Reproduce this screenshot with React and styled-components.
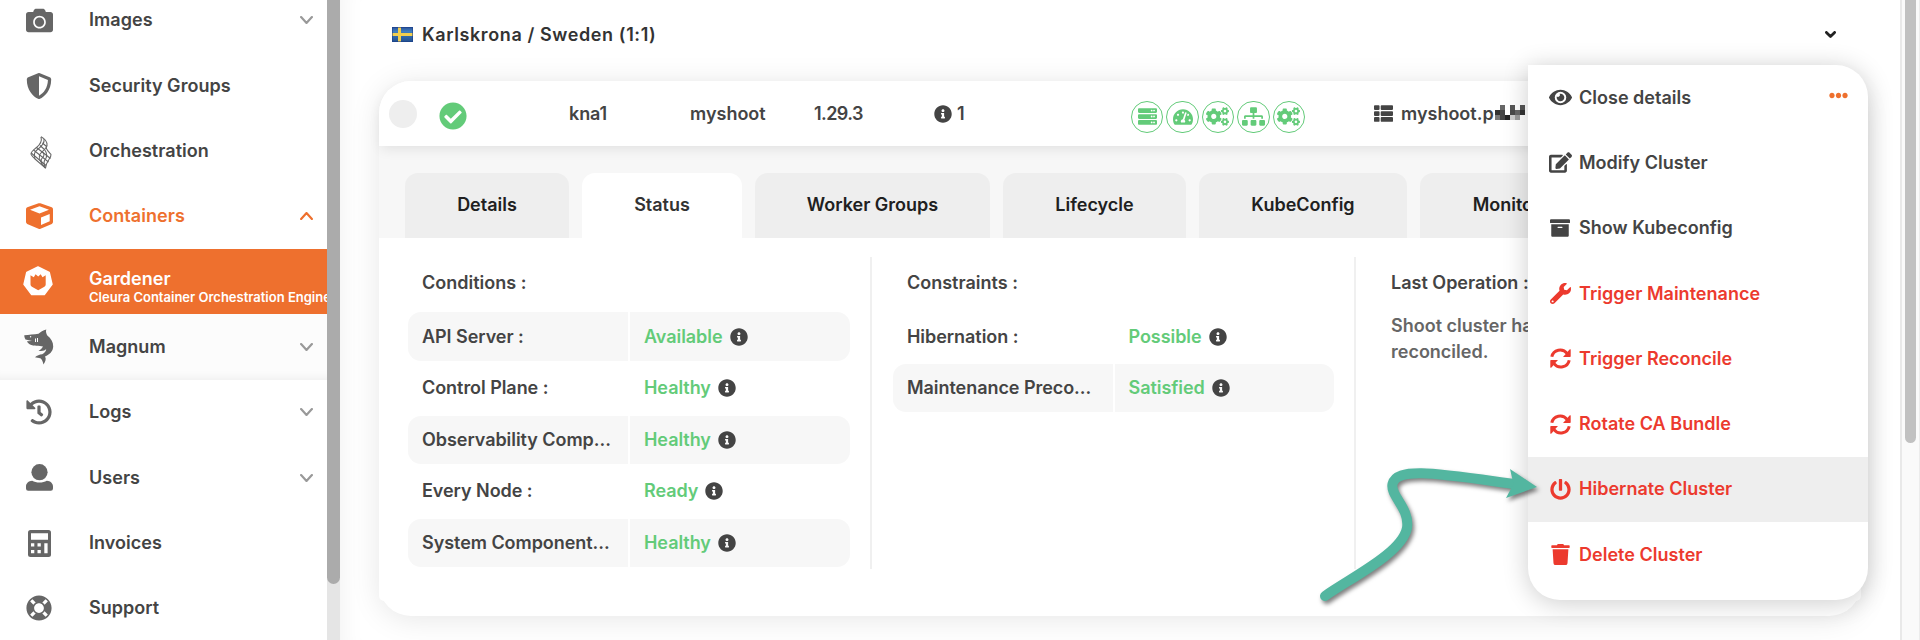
import React from "react";
import styled, { createGlobalStyle, css } from "styled-components";
import {
  FaCamera, FaShieldAlt, FaHistory, FaLifeRing, FaCheckCircle, FaInfoCircle, FaServer,
  FaTachometerAlt, FaCogs, FaSitemap, FaThList, FaEye, FaEdit, FaArchive, FaWrench,
  FaPowerOff, FaTrash, FaEllipsisH,
} from "react-icons/fa";

const color = {
  text: "#444444",
  icon: "#666666",
  orange: "#ee702e",
  green: "#63cb79",
  red: "#ec3a2e",
  grey: "#eeeeee",
  pale: "#f7f7f7",
};

const GlobalStyle = createGlobalStyle`
  * { box-sizing: border-box; }
  body {
    margin: 0;
    height: 640px;
    overflow: hidden;
    background: #fff;
    color: ${color.text};
    font: 600 18px/26px Inter, "Liberation Sans", sans-serif;
  }
`;

const Page = styled.div`
  display: flex;
  width: 1920px;
  height: 640px;
  overflow: hidden;
`;

const Label = styled.span`
  white-space: nowrap;
  letter-spacing: ${(p) => p.$track ?? 0}px;
`;

/* ---------- sidebar ---------- */

const Sidebar = styled.nav`
  width: 327px;
  flex: none;
  overflow: hidden;
  background: #fff;
`;

const SideList = styled.div`
  display: flex;
  flex-direction: column;
  margin-top: -12.2px;
`;

const SideItem = styled.div`
  display: flex;
  align-items: center;
  height: 65.33px;
  flex: none;
  padding-right: 14px;
  color: ${(p) => (p.$tone === "open" ? color.orange : color.text)};
  ${(p) => p.$tone === "sub" && css`
    background: #fcfcfc;
    box-shadow: inset 0 -10px 10px -8px rgba(0, 0, 0, 0.06);
  `}
  ${(p) => p.$tone === "active" && css`
    background: ${color.orange};
    color: #fff;
    padding-right: 0;
  `}
`;

const SideIcon = styled.span`
  display: flex;
  justify-content: center;
  width: 78px;
  margin-right: 11px;
  flex: none;
  color: ${(p) => (p.$tone === "open" ? color.orange : p.$tone === "active" ? "#fff" : color.icon)};
  svg { display: block; }
`;

const SideText = styled.div`
  display: flex;
  flex-direction: column;
  flex: 1;
  min-width: 0;
  padding-top: ${(p) => (p.$two ? 7 : 0)}px;
`;

const SubText = styled(Label)`
  font-size: 13px;
  line-height: 16px;
  margin-top: -3px;
`;

const Gutter = styled.div`
  width: 13px;
  flex: none;
  background: #e5e5e5;
`;

const GutterThumb = styled.div`
  height: 584px;
  border-radius: 0 0 7px 7px;
  background: #ababab;
`;

/* ---------- main ---------- */

const Main = styled.main`
  width: 1560px;
  flex: none;
  height: 640px;
  padding-left: 39px;
  box-shadow: inset 24px 0 22px -20px rgba(0, 0, 0, 0.05);
`;

const Region = styled.header`
  display: flex;
  align-items: center;
  height: 81px;
  padding: 0 64px 12px 13px;
  color: #333;
`;

const RegionName = styled.div`
  flex: 1;
  padding: 0 0 0 9px;
`;

const Card = styled.section`
  width: 1482px;
  height: 535px;
  background: #fff;
  border-radius: 32px;
  box-shadow: 0 3px 30px rgba(0, 0, 0, 0.1);
`;

const Summary = styled.div`
  position: relative;
  display: flex;
  align-items: center;
  height: 65px;
  padding-left: 10px;
  border-radius: 32px 32px 0 0;
  background: #fff;
  box-shadow: 0 5px 13px -2px rgba(0, 0, 0, 0.09);
`;

const Dot = styled.div`
  width: 28px;
  height: 28px;
  border-radius: 50%;
  background: ${color.grey};
  margin-right: 22px;
`;

const Cell = styled.div`
  display: flex;
  align-items: center;
  width: ${(p) => p.$w}px;
  gap: ${(p) => p.$gap || 5}px;
  flex: none;
  padding-top: ${(p) => p.$drop || 0}px;
  color: ${(p) => p.$color || "inherit"};
`;

const Ring = styled.span`
  display: flex;
  align-items: center;
  justify-content: center;
  width: 32.4px;
  height: 32.4px;
  border: 1.3px solid ${color.green};
  border-radius: 50%;
  flex: none;
`;

const Mosaic = styled.div`
  display: grid;
  grid-template-columns: repeat(6, 5px);
  grid-auto-rows: 5px;
  margin-left: -7px;
  margin-bottom: 2px;
`;

const Pixel = styled.i`
  background: ${(p) => p.$c};
`;

const Tabs = styled.div`
  display: flex;
  gap: 13px;
  height: 92px;
  padding: 26.5px 0 0 26px;
  background: ${color.pale};
`;

const Tab = styled.div`
  display: flex;
  align-items: center;
  justify-content: center;
  width: ${(p) => p.$w}px;
  flex: none;
  border-radius: 13px 13px 0 0;
  background: ${(p) => (p.$on ? "#fff" : color.grey)};
  color: ${(p) => (p.$on ? "#333" : "#202020")};
`;

const Panel = styled.div`
  display: flex;
  height: 363px;
  padding: 19px 0 0 29px;
  background: #fff;
  border-radius: 0 0 5px 5px;
`;

const Column = styled.div`
  width: ${(p) => p.$w}px;
  height: 312px;
  flex: none;
  padding-right: 20px;
  padding-left: ${(p) => p.$left || 0}px;
  border-left: ${(p) => (p.$left ? "2px solid #f0f0f0" : "0")};
`;

const ColumnTitle = styled.div`
  padding: 13px 0 0 14px;
  height: 55.4px;
`;

const Row = styled.div`
  display: grid;
  grid-template-columns: ${(p) => p.$split}px 1fr;
  gap: 2px;
  height: 48.5px;
  margin-bottom: 3.1px;
`;

const RowCell = styled.div`
  display: flex;
  align-items: center;
  gap: 7px;
  padding-left: 14px;
  background: ${(p) => (p.$shade ? color.pale : "transparent")};
  border-radius: ${(p) => (p.$end ? "0 13px 13px 0" : "13px 0 0 13px")};
  svg { color: ${color.text}; }
`;

const Good = styled(Label)`
  color: ${color.green};
`;

const Note = styled.p`
  margin: 0 0 0 14px;
  padding-top: 1px;
  width: 210px;
  color: #666;
`;

/* ---------- window scrollbar ---------- */

const Scroll = styled.div`
  width: 20px;
  height: 640px;
  flex: none;
  padding-left: 3px;
  background: #fafafa;
  border-left: 2px solid #e9e9e9;
  border-right: 1px solid #ececec;
`;

const ScrollThumb = styled.div`
  width: 11px;
  height: 443px;
  border-radius: 0 0 6px 6px;
  background: #c1c1c1;
`;

/* ---------- floating menu ---------- */

const Menu = styled.div`
  position: absolute;
  left: 1528px;
  top: 65px;
  width: 340px;
  height: 535px;
  background: #fff;
  border-radius: 0 32px 32px 32px;
  box-shadow: 0 3px 26px rgba(0, 0, 0, 0.2);
`;

const MenuItem = styled.div`
  display: flex;
  align-items: center;
  height: 65.3px;
  padding-right: 20px;
  background: ${(p) => (p.$on ? color.grey : "transparent")};
  color: ${(p) => (p.$danger ? color.red : color.text)};
`;

const MenuIcon = styled.span`
  display: flex;
  justify-content: center;
  width: 24px;
  margin: 0 7px 0 20px;
`;

const More = styled.span`
  display: flex;
  margin: 0 0 4px auto;
  color: ${color.orange};
`;

const Pointer = styled.svg`
  position: absolute;
  left: 1300px;
  top: 450px;
  filter: drop-shadow(2px 3px 2px rgba(0, 0, 0, 0.5));
`;

/* ---------- drawings ---------- */

const Chevron = ({ up, w = 13, weight = 2.2 }) => (
  <svg width={w} height={w * 0.62} viewBox={`0 0 ${w} ${w * 0.62}`} fill="none"
    stroke="currentColor" strokeWidth={weight} strokeLinecap="round" strokeLinejoin="round">
    <path d={up
      ? `M${weight / 2} ${w * 0.62 - weight / 2} L${w / 2} ${weight / 2} L${w - weight / 2} ${w * 0.62 - weight / 2}`
      : `M${weight / 2} ${weight / 2} L${w / 2} ${w * 0.62 - weight / 2} L${w - weight / 2} ${weight / 2}`} />
  </svg>
);

const ChevronSlot = styled.span`
  display: flex;
  color: ${(p) => p.$c || "#999"};
`;

const Lattice = () => (
  <svg width="22" height="33" viewBox="0 0 22 33" fill="none" stroke="#666" strokeWidth="1.05">
    <path d="M11 .8C12.500 6 9.500 9 6.500 11.500C3.500 14 1 15.500 1 18C1 19 3 21 5 23L15.500 32.200" />
    <path d="M11 .8C15 3 17.500 6 17 9.500C16.500 13 11 16 9.500 19C8.500 22 11 27 15.500 32.200" />
    <path d="M14 3C15 8 10 11.500 7.500 13.500C4.500 16 3.500 18 5 23" />
    <path d="M17 9.500C15 12 17 14 21 18.500C21.500 22 16 25 15.500 32.200" />
    <path d="M14.500 13.500C18 18 17.500 21 14.500 24.500C13.500 27 14 29 15.500 32" />
    <path d="M12 15.500C15 18 14.500 20 11.500 23C10.500 24.500 11 26 12 28.500" />
    <path d="M12.500 7L16.500 10.500M10 9.500L14.500 13.500M6.500 11.500L20.500 22.500M3.500 14L18.500 26M1.200 17L16 29.500" />
  </svg>
);

const LatticeSlot = styled.span`
  display: flex;
  padding: 2px 0 0 3px;
`;

const Box = () => (
  <svg width="27" height="26" viewBox="0 0 27 26">
    <path fill="currentColor" d="M12.600.3Q13.500 0 14.400.3L25.700 4.300Q27 4.800 27 6.200V19Q27 20.300 25.800 20.900L14.500 25.700Q13.500 26.100 12.500 25.700L1.200 20.900Q0 20.300 0 19V6.200Q0 4.800 1.300 4.300Z" />
    <path fill="#fff" d="M13.500 3.300L23 6.700L13.500 10.500L4 6.700ZM15 14.500L23.700 11V18.300L15 22Z" />
  </svg>
);

const Gardener = () => (
  <svg width="30" height="30" viewBox="0 0 30 30">
    <path fill="#fff" stroke="#fff" strokeWidth="1.500" strokeLinejoin="round" d="M15 1L26.200 6.400L29 18.400L21.300 28.500H8.700L1 18.400L3.800 6.400Z" />
    <path fill={color.orange} d="M7.500 9.200L10.800 11.200L12.600 8.300L15.200 10.600L17.700 8.300L19.500 11.200L22.700 9.200V18.500Q22.700 20 21.400 20.800L15.200 24.200L8.900 20.800Q7.500 20 7.500 18.500Z" />
  </svg>
);

const GardenerSlot = styled.span`
  display: flex;
  padding: 0 2px 2px 0;
`;

const Shark = () => (
  <svg width="30" height="36" viewBox="0 0 30 36">
    <path fill="currentColor" d="M.3 6.300C5 5.800 10 5.500 14.500 4.800C16.500 3.300 19 1 22.300.5C21.600 2.500 22.200 4.500 23.300 6.500C27 9.500 29.300 13 29.200 17.500C29 22.500 25.500 25.500 21 27.500C22.500 29.500 21.500 32.500 19.500 35.500C18.700 33 18.300 31 16.800 29.600C14.500 28.700 12.500 28.500 11 28.300C13 26.300 15.500 25.700 18.200 25.300C20.500 23.800 22 22.500 22.200 20C21 21.500 18.500 22.300 14.500 21.700C16.500 20.800 18 19.500 19 17.500C15.500 16.500 9.500 17.300 6 15.500C4.500 14.700 3.500 13.500 3 12.300L8 12.100L1.500 10.400C.6 9 .3 7.500.3 6.300Z" />
    <circle cx="6.600" cy="7.800" r=".7" fill="#fff" />
    <path d="M11.500 9.500V13M13.500 9V13" stroke="#fff" strokeWidth="1" />
  </svg>
);

const Person = () => (
  <svg width="27" height="27" viewBox="0 0 27 27" fill="currentColor">
    <circle cx="13.500" cy="8.200" r="8.100" />
    <path d="M6.200 16.800C10 19.200 17 19.200 20.800 16.800C24.500 17 27 19.500 27 22.500V24.500Q27 26.700 24.800 26.700H2.200Q0 26.700 0 24.500V22.500C0 19.500 2.500 17 6.200 16.800Z" />
  </svg>
);

const Calculator = () => (
  <svg width="23" height="27" viewBox="0 0 23 27">
    <rect width="23" height="27" rx="2.500" fill="currentColor" />
    <path fill="#fff" d="M3 3.300H20V9.800H3ZM3 13.300H6.300V16.600H3ZM9.500 13.300H12.800V16.600H9.500ZM16.300 13.300H19.600V23.300H16.300ZM3 20H6.300V23.300H3ZM9.500 20H12.800V23.300H9.500Z" />
  </svg>
);

const Refresh = () => (
  <svg width="21" height="21" viewBox="0 0 21 21">
    <g fill="none" stroke="currentColor" strokeWidth="3">
      <path d="M1.800 8.800C3.200 1.500 12.500-.5 17.300 5.600" />
      <path d="M19.200 12.200C17.800 19.500 8.500 21.500 3.700 15.400" />
    </g>
    <path fill="currentColor" d="M20.700 1.300V8.200Q20.700 8.900 20 8.900H13L15.300 6.500L19.500 1.500ZM.3 19.700V12.800Q.3 12.100 1 12.100H8L5.700 14.500L1.500 19.500Z" />
  </svg>
);

const Flag = () => (
  <svg width="21" height="15" viewBox="0 0 21 15">
    <defs>
      <linearGradient id="flagBlue" x1="0" y1="0" x2="0" y2="1">
        <stop offset="0" stopColor="#2a4f96" />
        <stop offset=".3" stopColor="#3f7fc0" />
        <stop offset="1" stopColor="#22508f" />
      </linearGradient>
    </defs>
    <rect width="21" height="15" fill="url(#flagBlue)" />
    <path d="M0 7.500H21M7.500 0V15" stroke="#f2cf4e" strokeWidth="3" />
    <rect x=".5" y=".5" width="20" height="14" fill="none" stroke="#173a86" strokeOpacity=".55" />
  </svg>
);

/* ---------- data ---------- */

const sideItems = [
  { name: "Images", icon: <FaCamera size={27} />, chev: true },
  { name: "Security Groups", icon: <FaShieldAlt size={26} /> },
  { name: "Orchestration", icon: <LatticeSlot><Lattice /></LatticeSlot> },
  { name: "Containers", icon: <Box />, chev: true, tone: "open" },
  { name: "Gardener", sub: "Cleura Container Orchestration Engine", icon: <GardenerSlot><Gardener /></GardenerSlot>, tone: "active" },
  { name: "Magnum", icon: <Shark />, chev: true, tone: "sub" },
  { name: "Logs", icon: <FaHistory size={26} />, chev: true },
  { name: "Users", icon: <Person />, chev: true },
  { name: "Invoices", icon: <Calculator /> },
  { name: "Support", icon: <FaLifeRing size={26} /> },
];

const tabs = [
  ["Details", 164], ["Status", 160], ["Worker Groups", 235],
  ["Lifecycle", 183], ["KubeConfig", 208], ["Monitoring", 200],
];

const conditions = [
  ["API Server :", "Available"],
  ["Control Plane :", "Healthy"],
  ["Observability Comp...", "Healthy"],
  ["Every Node :", "Ready"],
  ["System Component...", "Healthy"],
];

const constraints = [
  ["Hibernation :", "Possible"],
  ["Maintenance Preco...", "Satisfied"],
];

const menuItems = [
  { name: "Close details", icon: <FaEye size={23} />, more: true },
  { name: "Modify Cluster", icon: <FaEdit size={23} /> },
  { name: "Show Kubeconfig", icon: <FaArchive size={20} /> },
  { name: "Trigger Maintenance", icon: <FaWrench size={21} />, danger: true },
  { name: "Trigger Reconcile", icon: <Refresh />, danger: true },
  { name: "Rotate CA Bundle", icon: <Refresh />, danger: true },
  { name: "Hibernate Cluster", icon: <FaPowerOff size={21} />, danger: true, on: true },
  { name: "Delete Cluster", icon: <FaTrash size={21} />, danger: true },
];

const mosaic = [
  "#fff", "#666", "#fff", "#555", "#fff", "#555",
  "#333", "#444", "#fff", "#4a4a4a", "#666", "#333",
  "#777", "#444", "#222", "#ccc", "#999", "#fff",
];

const StatusRows = ({ rows, split, shadeFirst }) =>
  rows.map(([name, value], i) => {
    const shade = (i % 2 === 0) === shadeFirst;
    return (
      <Row key={name} $split={split}>
        <RowCell $shade={shade}><Label $track={-0.05}>{name}</Label></RowCell>
        <RowCell $shade={shade} $end><Good $track={-0.05}>{value}</Good><FaInfoCircle size={18} /></RowCell>
      </Row>
    );
  });

export default function App() {
  return (
    <>
      <GlobalStyle />
      <Page>
        <Sidebar>
          <SideList>
            {sideItems.map((s) => (
              <SideItem key={s.name} $tone={s.tone}>
                <SideIcon $tone={s.tone}>{s.icon}</SideIcon>
                <SideText $two={!!s.sub}>
                  <Label $track={0.04}>{s.name}</Label>
                  {s.sub && <SubText>{s.sub}</SubText>}
                </SideText>
                {s.chev && (
                  <ChevronSlot $c={s.tone === "open" ? color.orange : undefined}>
                    <Chevron up={s.tone === "open"} />
                  </ChevronSlot>
                )}
              </SideItem>
            ))}
          </SideList>
        </Sidebar>
        <Gutter><GutterThumb /></Gutter>
        <Main>
          <Region>
            <Flag />
            <RegionName><Label $track={0.6}>Karlskrona / Sweden (1:1)</Label></RegionName>
            <ChevronSlot $c="#222"><Chevron w={11} weight={2.8} /></ChevronSlot>
          </Region>
          <Card>
            <Summary>
              <Dot />
              <Cell $w={130} $drop={4} $color={color.green}><FaCheckCircle size={28} /></Cell>
              <Cell $w={121}><Label $track={-0.1}>kna1</Label></Cell>
              <Cell $w={124}><Label>myshoot</Label></Cell>
              <Cell $w={120}><Label $track={-0.6}>1.29.3</Label></Cell>
              <Cell $w={197}><FaInfoCircle size={18} /><Label>1</Label></Cell>
              <Cell $w={243} $gap={3} $drop={7} $color={color.green}>
                <Ring><FaServer size={19} /></Ring>
                <Ring><FaTachometerAlt size={20} /></Ring>
                <Ring><FaCogs size={23} /></Ring>
                <Ring><FaSitemap size={23} /></Ring>
                <Ring><FaCogs size={23} /></Ring>
              </Cell>
              <Cell $w={200} $gap={8}>
                <FaThList size={19} />
                <Label>myshoot.p</Label>
                <Mosaic>{mosaic.map((c, i) => <Pixel key={i} $c={c} />)}</Mosaic>
              </Cell>
            </Summary>
            <Tabs>
              {tabs.map(([name, w]) => (
                <Tab key={name} $w={w} $on={name === "Status"}><Label>{name}</Label></Tab>
              ))}
            </Tabs>
            <Panel>
              <Column $w={462}>
                <ColumnTitle><Label>Conditions :</Label></ColumnTitle>
                <StatusRows rows={conditions} split={220} shadeFirst />
              </Column>
              <Column $w={484} $left={21}>
                <ColumnTitle><Label>Constraints :</Label></ColumnTitle>
                <StatusRows rows={constraints} split={219.5} shadeFirst={false} />
              </Column>
              <Column $w={300} $left={21}>
                <ColumnTitle><Label>Last Operation :</Label></ColumnTitle>
                <Note><Label>Shoot cluster has been</Label><br /><Label>reconciled.</Label></Note>
              </Column>
            </Panel>
          </Card>
        </Main>
        <Scroll><ScrollThumb /></Scroll>
      </Page>
      <Menu>
        {menuItems.map((m) => (
          <MenuItem key={m.name} $danger={m.danger} $on={m.on}>
            <MenuIcon>{m.icon}</MenuIcon>
            <Label $track={0.02}>{m.name}</Label>
            {m.more && <More><FaEllipsisH size={19} /></More>}
          </MenuItem>
        ))}
      </Menu>
      <Pointer width="250" height="160" viewBox="1300 450 250 160">
        <path d="M1325 596C1352 577 1402 553 1407 528C1410 508 1390 496 1392.500 484C1397 466 1440 474 1518 484.500"
          fill="none" stroke="#53b6a0" strokeWidth="10" strokeLinecap="round" />
        <path d="M1510 469L1537 487L1506 498L1513.500 484Z" fill="#53b6a0" />
      </Pointer>
    </>
  );
}
